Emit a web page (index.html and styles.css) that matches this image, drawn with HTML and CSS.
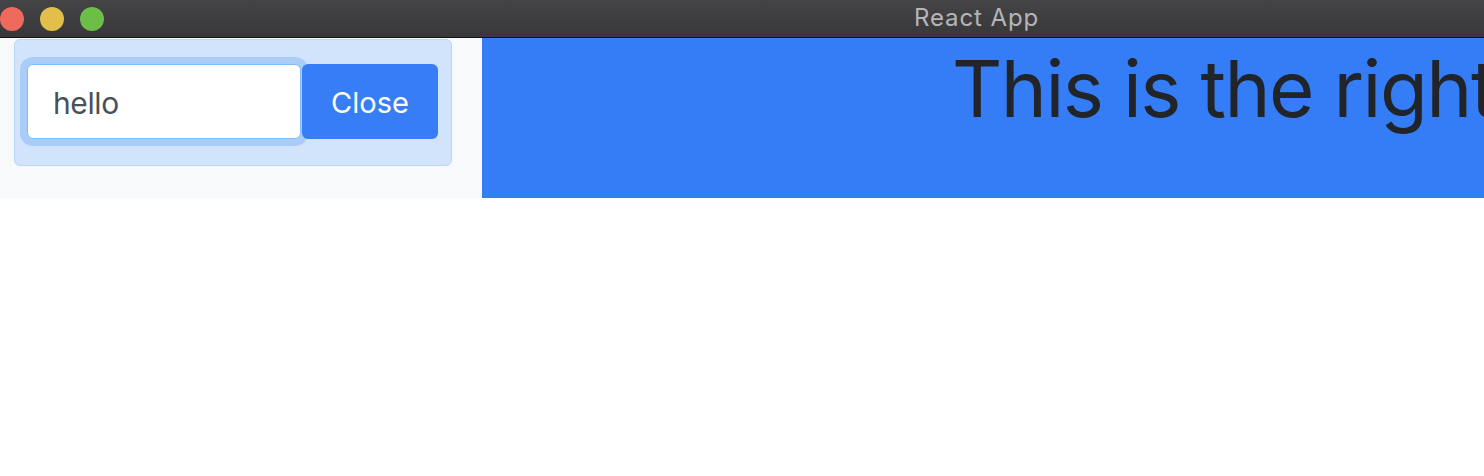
FILE: index.html
```html
<!DOCTYPE html>
<html lang="en">
<head>
<meta charset="utf-8">
<title>React App</title>
<link rel="stylesheet" href="styles.css">
</head>
<body>
  <header class="titlebar">
    <div class="lights">
      <span class="light red"></span>
      <span class="light yellow"></span>
      <span class="light green"></span>
    </div>
    <div class="title">React App</div>
  </header>
  <main class="app">
    <section class="left">
      <div class="card">
        <input class="field" type="text" value="hello">
        <button class="btn">Close</button>
      </div>
    </section>
    <section class="right">
      <h1 class="heading">This is the right panel</h1>
    </section>
  </main>
</body>
</html>
```
FILE: styles.css
```css
* { box-sizing: border-box; }
html, body { margin: 0; padding: 0; background: #ffffff; }
body { font-family: Inter, "Noto Sans", sans-serif; width: 1484px; height: 476px; overflow: hidden; }

.titlebar {
  height: 38px;
  display: flex;
  align-items: center;
  background: linear-gradient(#444447, #38383a);
  border-bottom: 1px solid #121212;
}
.lights { display: flex; gap: 16px; }
.light { width: 24px; height: 24px; border-radius: 50%; display: block; }
.red { background: #ee6a5e; }
.yellow { background: #e2bf4a; }
.green { background: #6cbe47; }
.title {
  margin-left: 810px;
  color: #b5b5b7;
  font-size: 24px;
  letter-spacing: 0.9px;
  line-height: 1;
  margin-top: -1px;
}

.app { display: flex; height: 160px; }
.left {
  width: 482px;
  flex: none;
  background: #f8f9fa;
  padding: 1px 0 0 14px;
}
.card {
  width: 438px;
  height: 127px;
  background: #d1e4fb;
  border: 1px solid #b8d5fa;
  border-radius: 6px;
  padding: 24px 12px;
  display: flex;
  gap: 1px;
}
.field {
  width: 274px;
  height: 75px;
  border: 1px solid #80bdff;
  border-radius: 6px;
  box-shadow: 0 0 0 7px #a9ccf9;
  padding: 2px 0 0 25px;
  font-family: Inter, "Noto Sans", sans-serif;
  font-size: 30px;
  letter-spacing: -0.4px;
  color: #495057;
  background: #ffffff;
  outline: none;
}
.btn {
  width: 136px;
  height: 75px;
  border: none;
  border-radius: 6px;
  background: #377ef6;
  color: #ffffff;
  font-family: Inter, "Noto Sans", sans-serif;
  font-size: 29px;
  padding: 2px 0 0;
}
.right {
  flex: 1;
  background: #357df6;
  overflow: hidden;
  padding-left: 470px;
}
.heading {
  margin: 4px 0 0;
  font-size: 78px;
  font-weight: 400;
  letter-spacing: -1.5px;
  line-height: 1.2;
  color: #212529;
  white-space: nowrap;
}
```
